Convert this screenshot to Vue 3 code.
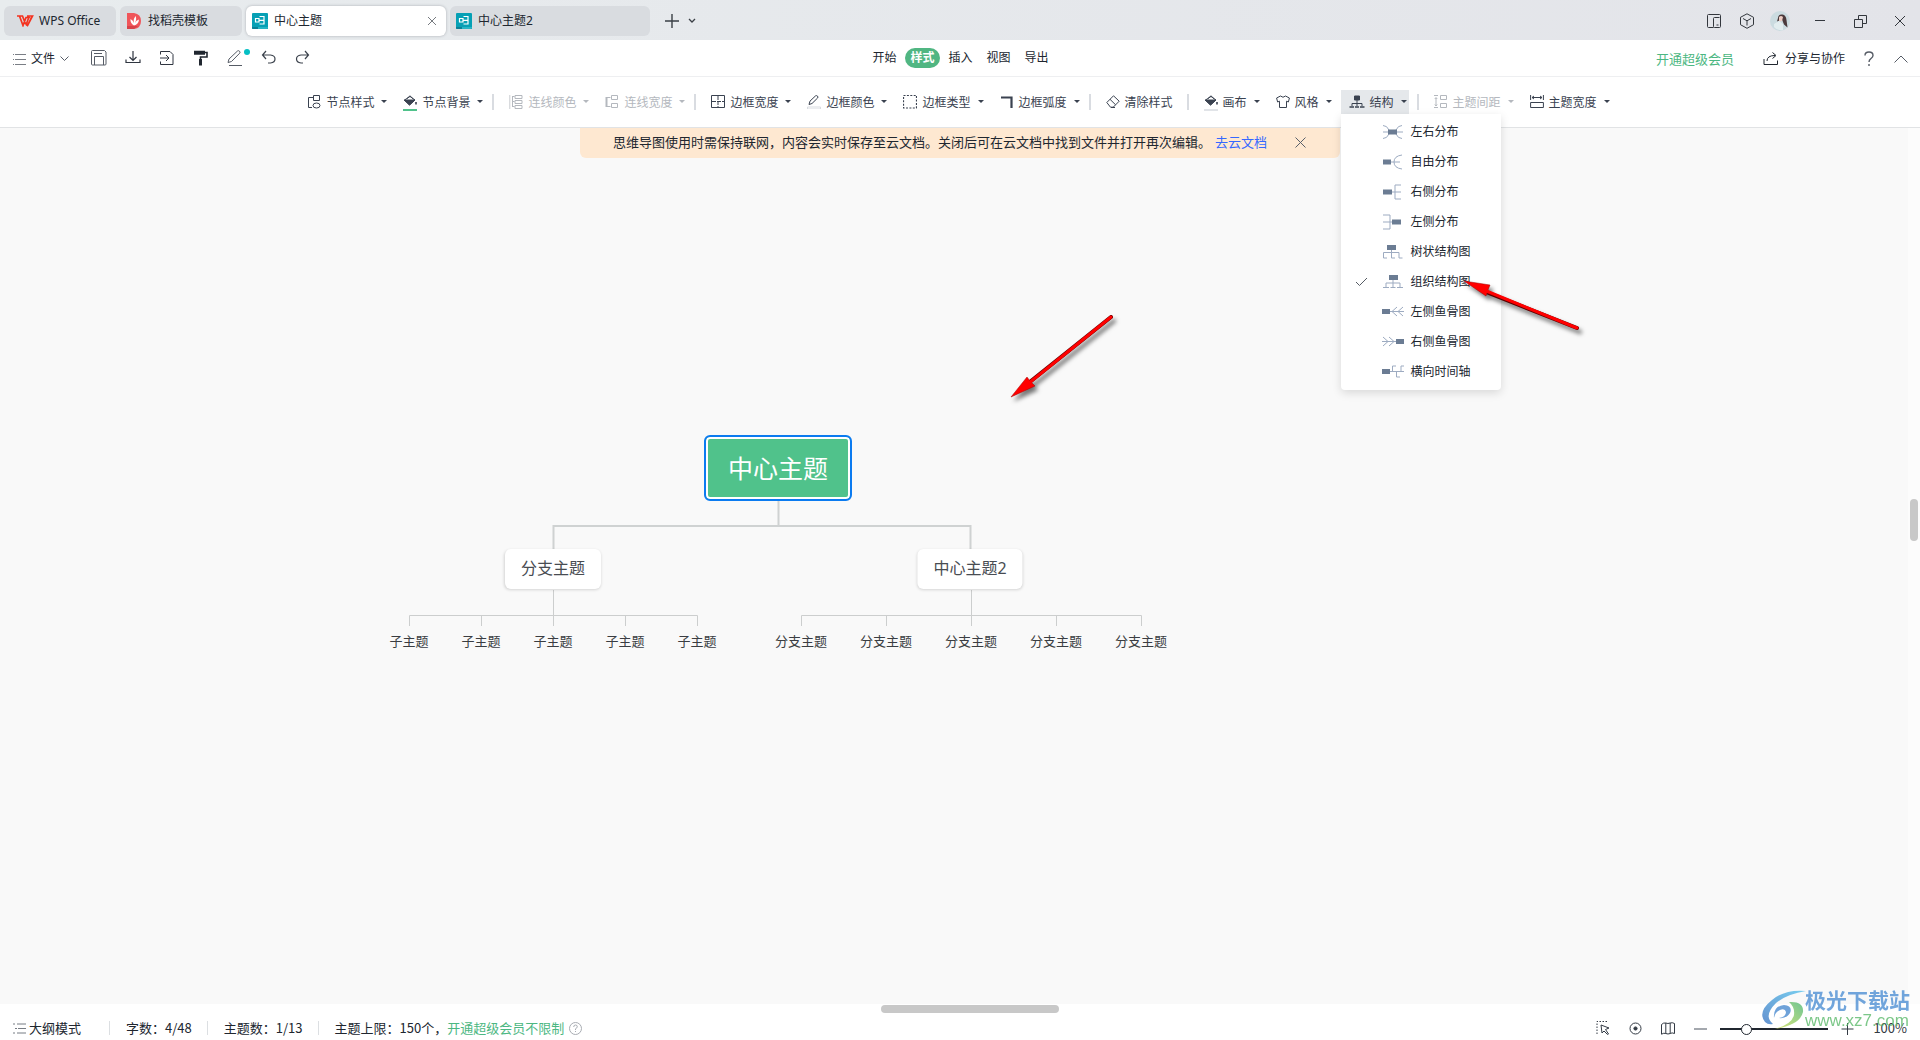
<script setup>
import { ref } from 'vue'

const zoom = ref(21)

const glyphs = {
  nodeStyle: '<path d="M6.5 2.5h-5v10H5M6.5 .5h6v5h-6z"/><ellipse cx="9.5" cy="10.5" rx="3.5" ry="2.5"/>',
  bucket: '<path d="M4 3.5L7 .8l3.5 3.4"/><path d="M1.5 5L7 1.5 12 5 6.5 10z"/><path d="M1 5h11L6.5 10z" fill="currentColor"/><path d="M13 7v2.5" stroke-width="1.6"/>',
  lineColor: '<path d="M3.5 1v11M3.5 1.5h2M3.5 6.5h2M3.5 11.5h2M6 .5h7v3H6zM6 5.5h7v3H6zM6 10.5h7v3H6z"/><path d="M.7 0v14" stroke-width="1.4" opacity=".5"/>',
  lineWidth: '<path d="M5.5 2.5h-4v9h4M6.5 .5h6v4h-6zM6.5 8.5h6v4h-6z"/><path d="M1.5 2v10" stroke-width="2"/>',
  borderWidth: '<path d="M.5 .5h13v12H.5z"/><path d="M7 1v11M1 6.5h12" stroke-dasharray="4 1"/>',
  pen: '<path d="M2 9.5l1-3.4L8.5 .9q1-.7 2 .2t0 2L5 8.500z"/><path d="M.5 12h13v2H.5z" stroke="#d8dbe0" fill="#fff"/>',
  borderType: '<path d="M.5 .5h13v12.5H.5z" stroke-dasharray="2 1.400" stroke-width="1.2"/>',
  corner: '<path d="M1 2.5h10.500V13" stroke-width="2.2"/>',
  eraser: '<path d="M.8 7.5L7.500 .8l5.700 5.400-6 6H4.500zM4 4.300l5.600 5.500M5 12.500h4"/>',
  shirt: '<path d="M4.5 1L.6 3l1 4 1.900-.8v6.300h7V6.200l1.900.8 1-4-3.900-2Q7 3.500 4.500 1z"/>',
  tree: '<path d="M5.5 1h5v4h-5z" fill="currentColor"/><path d="M8 5v6M3 11V8.500h10V11"/><path d="M.5 12h4.500M6 12h4M11 12h4.500" stroke-width="1.6"/>',
  spacing: '<path d="M6.5 .5h6v4h-6zM6.5 8.5h6v4h-6z"/><path d="M2 3v8M0 .5h4M0 12.5h4M.8 4L2 2.500 3.200 4M.8 9.500L2 11l1.200-1.500"/>',
  width: '<path d="M.6 0v5M13.400 0v5M2 2.500h10M4 1L2 2.500 4 4M10 1l2 1.500L10 4M.6 7.500h12.800v5H.6z"/>'
}

const groups = [
  [{ t: '节点样式', i: 'nodeStyle' }, { t: '节点背景', i: 'bucket', bar: '#50c28b' }],
  [{ t: '连线颜色', i: 'lineColor', off: true }, { t: '连线宽度', i: 'lineWidth', off: true }],
  [{ t: '边框宽度', i: 'borderWidth' }, { t: '边框颜色', i: 'pen' }, { t: '边框类型', i: 'borderType' }, { t: '边框弧度', i: 'corner' }],
  [{ t: '清除样式', i: 'eraser', plain: true }],
  [{ t: '画布', i: 'bucket', bar: '#e1e4e8' }, { t: '风格', i: 'shirt' }, { t: '结构', i: 'tree', open: true }],
  [{ t: '主题间距', i: 'spacing', off: true }, { t: '主题宽度', i: 'width' }]
]

const box = (x, y, w = 8, h = 5) => `<path d="M${x} ${y}h${w}v${h}h-${w}z" fill="#6b7c93" stroke="none"/>`
const layouts = [
  { t: '左右分布', g: '<path d="M1 1.500q4 0 6 4.500M1 8h20M1 14.500q4 0 6-4.500M20 1.500q-4 0-6 4.500M20 14.500q-4 0-6-4.500"/>' + box(6, 5.5, 9) },
  { t: '自由分布', g: '<path d="M9 8h9M20 1Q12 2 12 8t8 7"/>' + box(1, 5.5) },
  { t: '右侧分布', g: '<path d="M9 8h10M19 1h-6v14h6"/>' + box(1, 5.5, 9) },
  { t: '左侧分布', g: '<path d="M1 8h10M1 1h7v14H1"/>' + box(10, 5.5, 9) },
  { t: '树状结构图', g: '<path d="M9.500 5v9H13M9.500 8.500h-8V14H5M9.500 8.500H17V14h3.500"/>' + box(5, 1, 9) },
  { t: '组织结构图', g: '<path d="M11 5v8M4 13V9h14v4M1 13.500h6M8.500 13.500h5M15 13.500h6"/>' + box(7, 1, 9) },
  { t: '左侧鱼骨图', g: '<path d="M8 7.500h14M10 7.500l5-4.500M16 7.500L21 3M10 7.500l5 4.500M16 7.500l5 4.500"/>' + box(0, 5) },
  { t: '右侧鱼骨图', g: '<path d="M0 7.500h14M6 7.500L1 3M12 7.500L7 3M6 7.500L1 12M12 7.500L7 12"/>' + box(14, 5) },
  { t: '横向时间轴', g: '<path d="M7 7.500h15M10.500 7.500V2H14M19 7.500V2h3M14.500 7.500V13H18"/>' + box(0, 5) }
]

const branches = [
  { t: '分支主题', x: 553, leaf: '子主题', xs: [409, 481, 553, 625, 697] },
  { t: '中心主题2', x: 970, leaf: '分支主题', xs: [801, 886, 971, 1056, 1141] }
]
</script>

<template>
  <div class="page">
    <header class="titlebar">
      <button class="tab home"><svg width="17" height="12" viewBox="0 0 17 12"><path d="M0 1h5.500l3 8M2.500 1l3.500 9.500L9 2.500h3L10.500 1M9 9.500l1.500 1L15.500 1H10M12 2l-3 8" fill="none" stroke="#f4321f" stroke-width="1.700"/></svg><span>WPS Office</span></button>
      <button class="tab store"><svg width="14" height="16" viewBox="0 0 14 16"><path d="M0 0h7q7 1 7 8t-7 8H0z" fill="#f0555a"/><path d="M0 13h11l-4 3H0z" fill="#d8434a"/><path d="M7 12.500Q3 10 3.500 6q3 1.500 3 4Q6 6 8.500 3q1.500 3-.5 7 1-3 4-3.500-.5 5-5 6z" fill="#fff"/></svg><span>找稻壳模板</span></button>
      <button v-for="(name, n) in ['中心主题', '中心主题2']" :key="name" class="tab doc" :class="{ current: n === 0 }">
        <svg width="16" height="16" viewBox="0 0 16 16"><rect width="16" height="16" rx="1" fill="#06a0b5"/><path d="M0 14h16v1q0 1-1 1H1q-1 0-1-1z" fill="#0b8096"/><path d="M6 14h10v1q0 1-1 1H6z" fill="#27b4c5"/><path d="M3.500 5.500h3.500v3.500H3.500zM7 7.300h4.500M7.500 3.500H12V7M7.500 11h4.500V7" fill="none" stroke="#fff" stroke-width="1.200"/></svg>
        <span>{{ name }}</span>
        <svg v-if="n === 0" class="close" width="10" height="10" viewBox="0 0 10 10"><path d="M1 1l8 8M9 1L1 9"/></svg>
      </button>
      <button class="icon add" aria-label="新建"><svg width="14" height="14" viewBox="0 0 14 14"><path d="M7 0v14M0 7h14" stroke="#3a3f45" stroke-width="1.400"/></svg></button>
      <button class="icon more" aria-label="标签列表"><svg width="8" height="6" viewBox="0 0 8 6"><path d="M1 1l3 3 3-3" stroke="#3a3f45" stroke-width="1.300"/></svg></button>
      <div class="window">
        <button class="icon" aria-label="侧栏"><svg width="14" height="14" viewBox="0 0 14 14"><path d="M6.500 13.500h-5q-1 0-1-1v-11q0-1 1-1h11q1 0 1 1v11q0 1-1 1h-5q-1 0-1-1v-8q0-1 1-1h5M9.500 11h2"/></svg></button>
        <button class="icon" aria-label="应用"><svg width="16" height="16" viewBox="0 0 16 16"><path d="M8 .8l6.500 3.500v7.400L8 15.300l-6.500-3.600V4.300zM4 5.500l4 2.300 4-2.300M8 7.800v4.700"/></svg></button>
        <button class="icon" aria-label="账号"><svg width="20" height="20" viewBox="0 0 20 20"><circle cx="10" cy="10" r="10" fill="#cbdbe0" stroke="none"/><path d="M8 7q0-4 4.500-3.500Q16 4 16.500 9l1 7.500-3.500-3-2-5-5 2z" fill="#4b3a3c" stroke="none"/><path d="M9 6q2-2 4 0l-1 4-3 .5z" fill="#edcdc4" stroke="none"/><path d="M4 13l5-3 4 3v6q-6 1-9-3z" fill="#e2edef" stroke="none"/></svg></button>
        <button class="icon" aria-label="最小化"><svg width="12" height="12" viewBox="0 0 12 12"><path d="M1 5.500h10"/></svg></button>
        <button class="icon" aria-label="还原"><svg width="13" height="13" viewBox="0 0 13 13"><path d="M.5 4.500h8v8h-8zM4.500 4V.5h8v8H9"/></svg></button>
        <button class="icon" aria-label="关闭"><svg width="12" height="12" viewBox="0 0 12 12"><path d="M1 1l10 10M11 1L1 11"/></svg></button>
      </div>
    </header>

    <div class="menubar">
      <div class="quick">
        <button class="file"><svg width="13" height="13" viewBox="0 0 13 13"><path d="M0 1.500h1M2 1.500h11M0 6.500h1M2 6.500h11M0 11.500h1M2 11.500h11" stroke="#7a7e85"/></svg><span>文件</span><svg width="9" height="6" viewBox="0 0 9 6"><path d="M.5 .5l4 4 4-4"/></svg></button>
        <button class="icon" aria-label="保存"><svg width="16" height="16" viewBox="0 0 16 16"><path d="M.5 1.500q0-1 1-1h12l1.500 1.500v12q0 1-1 1h-12.500q-1 0-1-1zM3.500 15V6.500h9V15M3 3.500h8"/></svg></button>
        <button class="icon" aria-label="下载"><svg width="16" height="16" viewBox="0 0 16 16"><path d="M8 1v9M4.500 7L8 10.500 11.500 7M1 9.500v3h14v-3" stroke="#2f3540" stroke-width="1.200"/></svg></button>
        <button class="icon" aria-label="导出"><svg width="16" height="16" viewBox="0 0 16 16"><path d="M1.500 4.500v-3h9.500l3 3v10H1.500v-3M1 8h9M7 5l3 3-3 3" stroke="#2f3540"/></svg></button>
        <button class="icon" aria-label="格式刷"><svg width="16" height="16" viewBox="0 0 16 16"><path d="M12 2.500h2V7H7.500v3" stroke="#20262f" stroke-width="1.600"/><path d="M1 .8h11v4H1zM6 9h3v6.500H6z" fill="#20262f" stroke="none"/></svg></button>
        <button class="icon marked" aria-label="画笔"><svg width="16" height="16" viewBox="0 0 16 16"><path d="M1 12.500l1-3.500L10.500 1q1-.8 2 .2t.2 2L4.500 11.500zM2 15.500h13"/></svg></button>
        <button class="icon" aria-label="撤销"><svg width="16" height="16" viewBox="0 0 16 16"><path d="M5 1L1.500 5 5 9M2 5h7.500q4.500.5 4.500 4t-4.500 4H7" stroke="#3c434d" stroke-width="1.200"/></svg></button>
        <button class="icon" aria-label="重做"><svg width="16" height="16" viewBox="0 0 16 16"><path d="M10 1l3.500 4L10 9M13 5H6q-4.500.5-4.500 4T6 13h2" stroke="#3c434d" stroke-width="1.200"/></svg></button>
      </div>
      <nav class="sections">
        <button v-for="s in ['开始', '样式', '插入', '视图', '导出']" :key="s" :class="{ active: s === '样式' }">{{ s }}</button>
      </nav>
      <div class="account">
        <a href="#" class="vip">开通超级会员</a>
        <button class="share"><svg width="16" height="14" viewBox="0 0 16 14"><path d="M1 7v5.500h13.500V8.500M4 9q0-5.500 8-5.500M9.500 .5l3.500 3-3.500 3"/></svg><span>分享与协作</span></button>
        <button class="icon" aria-label="帮助"><svg width="10" height="16" viewBox="0 0 10 16"><path d="M1 4.500Q1 1 5 1t4 3.500Q9 6 7 7.500T5 11M5 13v2" stroke-width="1.400"/></svg></button>
        <button class="icon" aria-label="收起"><svg width="14" height="8" viewBox="0 0 14 8"><path d="M.5 7.500l6.500-6.500 6.500 6.500"/></svg></button>
      </div>
    </div>

    <div class="toolbar">
      <div v-for="(g, n) in groups" :key="n" class="group">
        <div v-for="b in g" :key="b.t" class="slot" :class="{ opened: b.open }">
          <button class="tool" :class="{ plain: b.plain }" :disabled="b.off">
            <span class="pic">
              <svg :width="b.open ? 16 : 14" height="14" :viewBox="b.open ? '0 0 16 14' : '0 0 14 14'" v-html="glyphs[b.i]"></svg>
              <i v-if="b.bar" class="bar" :style="{ background: b.bar }"></i>
            </span>
            <span class="label">{{ b.t }}</span>
            <i v-if="!b.plain" class="caret"></i>
          </button>
          <div v-if="b.open" class="menu" role="menu">
            <button v-for="l in layouts" :key="l.t" role="menuitem">
              <svg v-if="l.t === '组织结构图'" class="check" width="13" height="10" viewBox="0 0 13 10"><path d="M1 5l3.500 3.500L12 1" stroke="#555b63"/></svg>
              <svg class="shape" width="22" height="16" viewBox="0 0 22 16" v-html="l.g"></svg>
              <span>{{ l.t }}</span>
            </button>
          </div>
        </div>
      </div>
    </div>

    <main class="stage">
      <div class="canvas">
        <div class="notice">
          <span>思维导图使用时需保持联网，内容会实时保存至云文档。关闭后可在云文档中找到文件并打开再次编辑。</span>
          <a href="#">去云文档</a>
          <button class="icon" aria-label="关闭提示"><svg width="11" height="11" viewBox="0 0 11 11"><path d="M.5 .5l10 10M10.500 .5l-10 10"/></svg></button>
        </div>
        <svg class="links" width="1200" height="520" viewBox="0 128 1200 520">
          <g stroke="#cfd2d2" stroke-width="2"><path d="M778.500 497v29M553.500 549v-23h417v23"/></g>
          <g stroke="#cccece">
            <template v-for="b in branches" :key="b.t">
              <path v-for="x in b.xs" :key="x" :d="`M${b.xs[2] + .5} 590V615.500H${x + .5}V626`" />
            </template>
          </g>
        </svg>
        <div class="node root">中心主题</div>
        <template v-for="b in branches" :key="b.t">
          <div class="node branch" :style="{ left: b.x + 'px' }">{{ b.t }}</div>
          <div v-for="x in b.xs" :key="x" class="node leaf" :style="{ left: x + 'px' }">{{ b.leaf }}</div>
        </template>
      </div>
      <div class="track"><i></i></div>
    </main>

    <footer class="status">
      <i class="hthumb"></i>
      <button class="outline"><svg width="13" height="11" viewBox="0 0 13 11"><path d="M0 1h2M4 1h9M2 5.500h2M5 5.500h8M0 10h2M4 10h9" stroke="#777c84"/></svg><span>大纲模式</span></button>
      <span class="stat">字数：4/48</span>
      <span class="stat">主题数：1/13</span>
      <span class="stat">主题上限：150个，<a href="#">开通超级会员不限制</a></span>
      <button class="icon help" aria-label="说明"><svg width="13" height="13" viewBox="0 0 13 13"><circle cx="6.500" cy="6.500" r="6" stroke="#a8acb2"/><path d="M4.700 5q0-2 1.800-2t1.800 1.800q0 1-1.800 2V8M6.500 9v1" stroke="#a8acb2"/></svg></button>
      <div class="view">
        <button class="icon" aria-label="框选"><svg width="14" height="14" viewBox="0 0 14 14"><path d="M1 13V.5h11" stroke-dasharray="1.500 1.500"/><path d="M5 4l8 3-3.500 1.500L12.500 13l-1 .5L8 10l-2 2z"/></svg></button>
        <button class="icon" aria-label="居中"><svg width="13" height="13" viewBox="0 0 13 13"><circle cx="6.500" cy="6.500" r="5.500"/><circle cx="6.500" cy="6.500" r="1.600" fill="#333a44"/></svg></button>
        <button class="icon" aria-label="导航图"><svg width="14" height="13" viewBox="0 0 14 13"><path d="M.5 2.500q2-2 4.300-1.500 2 1 4.400 0 2-.8 4.300.5v10q-2.500-1.200-4.300 0-2.200 1-4.400 0-2-.8-4.300.7zM4.800 1v10.500M9.200 1v10.500"/></svg></button>
        <button class="icon" aria-label="缩小"><svg width="13" height="13" viewBox="0 0 13 13"><path d="M0 7h13" stroke="#7d838b" stroke-width="1.400"/></svg></button>
        <input v-model="zoom" type="range" min="0" max="100" aria-label="缩放" />
        <button class="icon" aria-label="放大"><svg width="13" height="13" viewBox="0 0 13 13"><path d="M.5 7h12M6.500 1v12"/></svg></button>
        <span class="percent">100%</span>
      </div>
    </footer>

    <div class="brand">
      <svg width="46" height="42" viewBox="0 0 46 42">
        <defs>
          <linearGradient id="sky" x1="0" y1="1" x2="1" y2="0"><stop offset="0" stop-color="#3f78c4" /><stop offset="1" stop-color="#58c4ee" /></linearGradient>
          <linearGradient id="leaf" x1="0" y1="1" x2="1" y2="0"><stop offset="0" stop-color="#d3df57" /><stop offset="1" stop-color="#4db878" /></linearGradient>
        </defs>
        <g stroke="none">
          <path d="M45 2Q24 0 11 11-4 23 4 33q3 3 8 2Q2 27 15 14 26 5 45 2z" fill="url(#sky)" />
          <path d="M28 13q15-1 14 10-3 13-28 17 17-5 19-14 1-8-5-13z" fill="url(#leaf)" />
          <path d="M13 29q-1-12 10-13 9 1 6 8-4 6-11 5 7-1 7-6-1-4-6-2-5 2-6 8z" fill="#4b8bd0" />
        </g>
      </svg>
      <div><strong>极光下载站</strong><span>www.xz7.com</span></div>
    </div>

    <svg class="arrow first" width="120" height="100" viewBox="0 0 120 100"><path d="M106 9L26 73" stroke="#5a0000" stroke-width="4" stroke-linecap="round"/><path d="M6 89l16-20 3 4 5 5z" fill="#f00" stroke="#a00000" stroke-width=".5"/><path d="M106 9L24 75" stroke="#f00" stroke-width="3" stroke-linecap="round"/></svg>
    <svg class="arrow second" width="140" height="70" viewBox="0 0 140 70"><path d="M121 55L30 19" stroke="#5a0000" stroke-width="4" stroke-linecap="round"/><path d="M8 8l26 4-2 5-2 6z" fill="#f00" stroke="#a00000" stroke-width=".5"/><path d="M121 55L28 17" stroke="#f00" stroke-width="3" stroke-linecap="round"/></svg>
  </div>
</template>

<style>
body { background: #fff; }
</style>

<style scoped>
.page { position: relative; display: flex; flex-direction: column; min-height: 100vh; overflow: hidden; font: 12px/18px "Noto Sans", "Noto Sans CJK SC", sans-serif; color: #20262f; }
.page * { box-sizing: border-box; }
button { display: flex; align-items: center; flex: none; padding: 0; border: 0; background: none; font: inherit; color: inherit; white-space: nowrap; }
a { text-decoration: none; }
svg { flex: none; display: block; fill: none; stroke: currentColor; }
.tab svg { stroke: none; }
.icon { justify-content: center; }

.titlebar { display: flex; align-items: center; gap: 4px; height: 40px; padding: 2px 0 0 4px; background: linear-gradient(90deg, #e8ecee, #e3e4e9); }
.tab { height: 30px; border-radius: 6px; background: #d9dce0; }
.home { width: 112px; padding-left: 13px; gap: 5px; }
.store { width: 122px; padding-left: 7px; gap: 7px; }
.doc { width: 200px; padding: 0 9px 0 6px; gap: 6px; }
.doc.current { background: #fff; box-shadow: 0 0 3px #a9adb3; }
.tab .close { margin-left: auto; stroke: #777b80; }
.add { margin-left: 11px; }
.more { margin-left: 5px; }
.window { display: flex; align-items: center; margin-left: auto; color: #33373d; }
.window .icon { width: 40px; }
.window .icon:nth-child(-n+3) { width: 33px; }
.window .icon:nth-child(3) { margin-right: 4px; }

.menubar { display: flex; align-items: center; height: 37px; padding: 0 12px 0 13px; border-bottom: 1px solid #eeeff1; }
.quick, .account { display: flex; align-items: center; flex: 1 1 0; color: #565c66; }
.file { gap: 5px; margin-right: 13px; padding-top: 2px; }
.file span, .share { color: #20262f; }
.quick .icon { width: 34px; height: 24px; }
.marked { position: relative; }
.marked::after { content: ""; position: absolute; top: 3px; right: 2px; width: 6px; height: 6px; border-radius: 50%; background: #05bfc4; }
.sections { display: flex; gap: 3px; }
.sections button { justify-content: center; width: 35px; height: 20px; border-radius: 10px; }
.sections .active { background: #50b682; color: #fff; font-weight: 700; }
.account { justify-content: flex-end; padding-top: 2px; }
.vip { margin-right: 29px; font-size: 13px; color: #4cb782; }
.share { gap: 6px; margin-right: 19px; }
.account .icon + .icon { margin-left: 20px; }

.toolbar { display: flex; justify-content: center; align-items: center; height: 51px; padding-right: 3px; border-bottom: 1px solid #e1e3e5; }
.group { display: flex; }
.group + .group::before { content: ""; width: 2px; height: 16px; margin: 4px 7px 0 1px; background: #d9dce1; }
.tool { height: 24px; padding: 0 8px; gap: 5px; color: #3a4250; }
.tool.plain { padding-right: 13px; }
.tool:disabled { color: #b4b8be; }
.pic { position: relative; }
.label { padding-top: 2px; }
.bar { position: absolute; left: 0; right: 0; bottom: -2px; height: 2px; }
.caret { width: 0; margin: 0 0 2px 2px; border: 3px solid transparent; border-top-color: currentColor; border-bottom: 0; }
.opened { position: relative; width: 68px; margin: 0 7px 0 1px; background: #e5e8eb; }
.menu { position: absolute; z-index: 3; top: 24px; left: 0; width: 160px; padding: 3px 0; border-radius: 0 0 4px 4px; background: #fff; box-shadow: 0 3px 10px #00000022; }
.menu button { position: relative; width: 100%; height: 30px; padding-left: 41px; gap: 7px; }
.check { position: absolute; left: 14px; }
.shape { color: #9dabc1; }

.stage { display: flex; flex: 1; }
.canvas { position: relative; flex: 1; padding-left: 12px; background: #f9f9f9; }
.notice { display: flex; align-items: center; width: 760px; height: 30px; margin: 0 auto; padding: 0 0 2px 33px; border-radius: 0 0 6px 6px; background: #fee8d1; font-size: 13px; white-space: nowrap; }
.notice a { margin-left: 4px; color: #3568ff; }
.notice .icon { margin-left: 28px; color: #59606a; }
.links { position: absolute; left: 0; top: 0; }
.node { position: absolute; white-space: nowrap; }
.root { left: 704px; top: 307px; width: 148px; height: 66px; border: 2px solid #0b7bf0; border-radius: 6px; background: #50c28b; box-shadow: inset 0 0 0 2px #fff; color: #fff; font-size: 25px; line-height: 62px; text-align: center; }
.branch, .leaf { transform: translateX(-50%); }
.branch { top: 421px; height: 40px; padding: 0 16px; border-radius: 6px; background: #fff; box-shadow: 0 1px 3px #00000026; color: #484c52; font-size: 16px; line-height: 38px; }
.leaf { top: 504px; color: #3a3d42; font-size: 13px; }
.track { display: flex; align-items: center; justify-content: center; width: 12px; background: #fcfcfc; }
.track i { width: 8px; height: 42px; margin-bottom: 92px; border-radius: 4px; background: #c8c8c8; }

.status { position: relative; display: flex; align-items: center; height: 36px; padding: 12px 13px 0; font: 13px/18px "Noto Sans CJK SC", sans-serif; }
.hthumb { position: absolute; left: calc(50% - 79px); top: 1px; width: 178px; height: 8px; border-radius: 4px; background: #c8c8c8; }
.outline { gap: 3px; margin-right: 28px; }
.stat { padding: 0 15px 0 16px; border-left: 1px solid #dcdfe2; line-height: 14px; white-space: nowrap; }
.stat a { color: #4cb782; }
.help { margin-left: -10px; }
.view { display: flex; align-items: center; margin-left: auto; color: #333a44; }
.view > .icon { margin-right: 19px; }
.view input { appearance: none; width: 108px; height: 12px; margin: 2px 13px 0 -6px; background: linear-gradient(#20262f, #20262f) center / 100% 2px no-repeat; }
.view input::-webkit-slider-thumb { appearance: none; width: 11px; height: 11px; border: 1px solid #20262f; border-radius: 50%; background: #fff; }

.brand { position: absolute; right: 10px; bottom: 9px; display: flex; align-items: center; opacity: .8; pointer-events: none; }
.brand div { display: flex; flex-direction: column; margin-left: -2px; }
.brand strong { color: #4f90d4; font-size: 21px; line-height: 22px; }
.brand span { color: #5cba6c; font: 17px/20px "Liberation Sans", sans-serif; }
.arrow { position: absolute; z-index: 4; filter: drop-shadow(3px 4px 2px #00000088); pointer-events: none; }
.first { left: 1005px; top: 308px; }
.second { left: 1456px; top: 273px; }
</style>
